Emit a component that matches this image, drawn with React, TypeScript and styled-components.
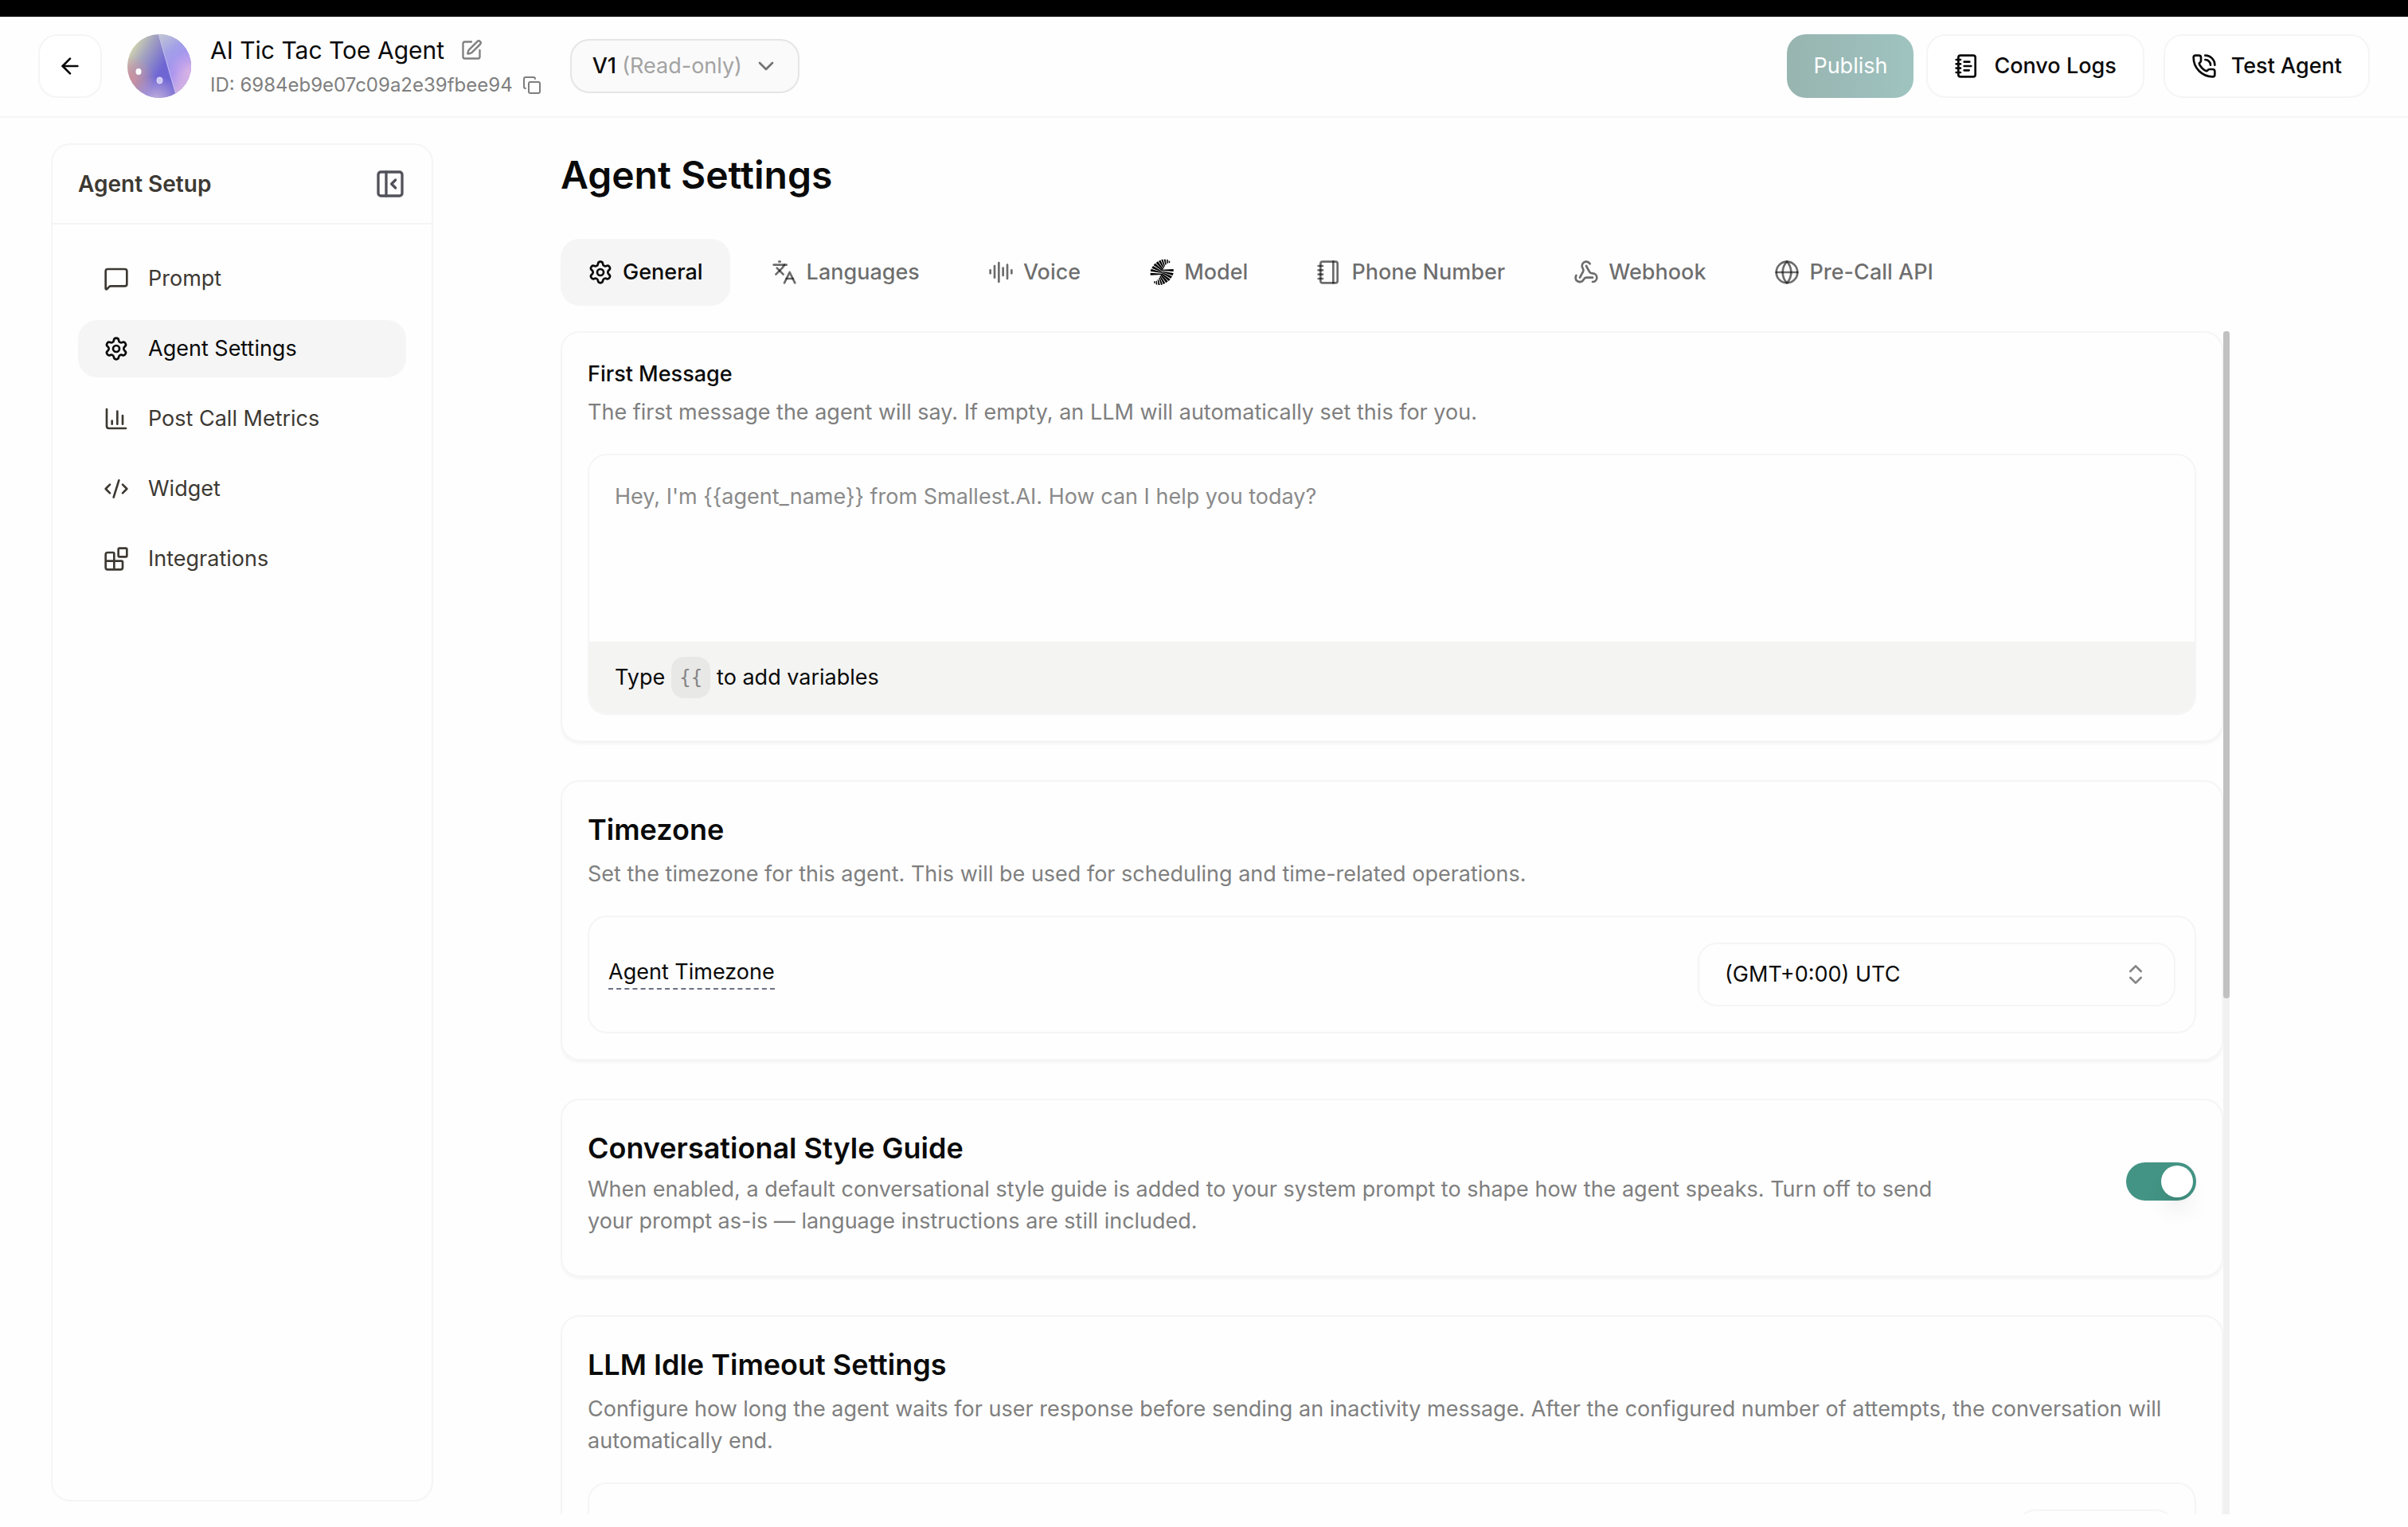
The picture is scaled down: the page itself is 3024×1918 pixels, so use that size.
import React, { useState } from "react";
import styled, { createGlobalStyle, css } from "styled-components";
import {
  ArrowLeft,
  AudioLines,
  Blocks,
  ChartColumn,
  ChevronDown,
  ChevronsUpDown,
  CodeXml,
  Copy,
  Globe,
  Languages,
  MessageSquare,
  Notebook,
  NotebookText,
  PanelLeftClose,
  PhoneCall,
  Settings,
  SquarePen,
  Webhook,
} from "lucide-react";

const color = {
  ink: "#0a0a0a",
  muted: "#7f7f7f",
  nav: "#3d3933",
  line: "#f5f5f5",
  fill: "#f5f5f5",
  surface: "#fefefe",
  green: "#439484",
};

const GlobalStyle = createGlobalStyle`
  *, *::before, *::after { box-sizing: border-box; }
  body {
    margin: 0;
    background: ${color.surface};
    color: ${color.ink};
    font-family: Inter, "Liberation Sans", sans-serif;
    font-size: 27px;
    line-height: 40px;
  }
  button, input, select, textarea {
    font: inherit;
    color: inherit;
  }
  button { cursor: pointer; }
  h1, h2, p { margin: 0; }
  svg { flex: none; display: block; }
`;

const Page = styled.div`
  display: flex;
  flex-direction: column;
  height: 100vh;
  overflow: hidden;
`;

const TopStrip = styled.div`
  flex: none;
  height: 21px;
  background: #000;
`;

/* ---------- header ---------- */

const Header = styled.header`
  flex: none;
  display: flex;
  align-items: flex-start;
  justify-content: space-between;
  padding: 22px 48px;
  height: 127px;
  border-bottom: 2px solid ${color.line};
`;

const HeaderGroup = styled.div`
  display: flex;
  align-items: center;
  height: 80px;
`;

const BackButton = styled.button`
  display: grid;
  place-items: center;
  width: 80px;
  height: 80px;
  padding: 0;
  border: 2px solid ${color.line};
  border-radius: 24px;
  background: #fff;
  margin-right: 32px;
`;

const AgentInfo = styled.div`
  display: flex;
  flex-direction: column;
  padding-top: 4px;
  margin: 0 36px 0 24px;
`;

const InfoLine = styled.div<{ $small?: boolean }>`
  display: flex;
  align-items: center;
  gap: ${(p) => (p.$small ? 12 : 20)}px;
  font-size: ${(p) => (p.$small ? 24 : 30)}px;
  line-height: 44px;
  color: ${(p) => (p.$small ? color.muted : color.ink)};
`;

const IconButton = styled.button`
  display: grid;
  place-items: center;
  padding: 0;
  border: 0;
  background: none;
  color: ${color.muted};
`;

const VersionButton = styled.button`
  display: flex;
  align-items: center;
  justify-content: space-between;
  min-width: 288px;
  height: 68px;
  padding: 0 24px 0 26px;
  border: 2px solid #e5e5e5;
  border-radius: 24px;
  background: #fafafa;
  font-weight: 500;
  svg { color: #737373; }
`;

const ReadOnly = styled.span`
  font-weight: 400;
  color: #a3a3a3;
`;

const ActionButton = styled.button<{ $primary?: boolean }>`
  display: flex;
  align-items: center;
  gap: 18px;
  height: 80px;
  padding: 0 33px;
  border: 2px solid ${color.line};
  border-radius: 24px;
  background: #fff;
  font-weight: 500;
  white-space: nowrap;
  margin-left: 24px;
  ${(p) =>
    p.$primary &&
    css`
      border: 0;
      background: linear-gradient(90deg, #98b5b0, #9bbbb8 50%, #9fc4bf);
      color: #fff;
      font-weight: 400;
      margin-right: -8px;
    `}
`;

/* ---------- sidebar ---------- */

const Body = styled.div`
  flex: 1;
  min-height: 0;
  display: flex;
  padding: 32px 0 16px 64px;
`;

const Sidebar = styled.aside`
  flex: none;
  width: 480px;
  margin-bottom: 16px;
  border: 2px solid ${color.line};
  border-radius: 24px;
`;

const SidebarHead = styled.div`
  display: flex;
  align-items: center;
  justify-content: space-between;
  height: 100px;
  padding: 0 32px;
  border-bottom: 2px solid ${color.line};
  color: ${color.nav};
  font-size: 28px;
  font-weight: 600;
`;

const CollapseButton = styled(IconButton)`
  color: #52525b;
`;

const Nav = styled.nav`
  display: flex;
  flex-direction: column;
  gap: 16px;
  padding: 32px;
`;

const NavLink = styled.a<{ $active?: boolean }>`
  display: flex;
  align-items: center;
  gap: 24px;
  height: 72px;
  padding: 0 32px;
  border-radius: 24px;
  text-decoration: none;
  color: ${(p) => (p.$active ? color.ink : color.nav)};
  background: ${(p) => (p.$active ? color.fill : "transparent")};
`;

/* ---------- main ---------- */

const Main = styled.main`
  flex: 1;
  min-width: 0;
  display: flex;
  flex-direction: column;
  padding: 0 224px 0 160px;
`;

const PageTitle = styled.h1`
  font-size: 48px;
  line-height: 80px;
  font-weight: 600;
  margin-bottom: 40px;
`;

const Tabs = styled.div`
  display: flex;
  gap: 18px;
  margin-bottom: 32px;
`;

const Tab = styled.button<{ $active?: boolean }>`
  display: flex;
  align-items: center;
  gap: 12px;
  height: 84px;
  padding: 0 34px;
  border: 0;
  border-radius: 24px;
  font-weight: 500;
  white-space: nowrap;
  color: ${(p) => (p.$active ? color.ink : "rgba(10, 10, 10, 0.6)")};
  background: ${(p) => (p.$active ? color.fill : "transparent")};
`;

const Scroller = styled.div`
  flex: 1;
  min-height: 0;
  display: flex;
`;

const Cards = styled.div`
  flex: 1;
  min-width: 0;
  display: flex;
  flex-direction: column;
  gap: 48px;
  overflow: hidden;
`;

const ScrollTrack = styled.div`
  flex: none;
  width: 8px;
  background: #f1f1f1;
`;

const ScrollThumb = styled.div`
  height: 56.4%;
  border-radius: 4px;
  background: #c1c1c1;
`;

const Card = styled.section`
  flex: none;
  padding: 32px;
  border: 2px solid ${color.line};
  border-radius: 24px;
  box-shadow: 0 2px 4px rgba(0, 0, 0, 0.05);
`;

const FieldLabel = styled.label`
  display: block;
  font-weight: 500;
  margin-bottom: 8px;
`;

const CardTitle = styled.h2<{ $tight?: boolean }>`
  font-size: 36px;
  line-height: 56px;
  font-weight: 600;
  margin-bottom: ${(p) => (p.$tight ? 4 : 8)}px;
`;

const Description = styled.p`
  color: ${color.muted};
`;

const Editor = styled.div`
  margin-top: 32px;
  border: 2px solid ${color.line};
  border-radius: 24px;
  overflow: hidden;
`;

const MessageBox = styled.textarea`
  display: block;
  width: 100%;
  height: 234px;
  padding: 32px;
  border: 0;
  outline: 0;
  resize: none;
  background: transparent;
  &::placeholder { color: #8a8a8a; opacity: 1; }
`;

const EditorHint = styled.div`
  display: flex;
  align-items: center;
  gap: 8px;
  height: 90px;
  padding: 0 32px;
  background: #f4f4f3;
`;

const Key = styled.kbd`
  padding: 6px 10px;
  border-radius: 16px;
  background: #e8e8e7;
  color: #858585;
  font-family: "DejaVu Sans Mono", "Liberation Mono", monospace;
  font-size: 24px;
`;

const SettingRow = styled.div`
  display: flex;
  align-items: center;
  justify-content: space-between;
  margin-top: 32px;
  padding: 32px 24px;
  border: 2px solid ${color.line};
  border-radius: 24px;
`;

const HintLabel = styled.label`
  line-height: 32px;
  padding-bottom: 4px;
  border-bottom: 2px dashed #6b7280;
`;

const SelectBox = styled.div`
  display: grid;
  align-items: center;
  width: 600px;
  svg {
    grid-area: 1 / 1;
    justify-self: end;
    margin-right: 34px;
    color: #858585;
    pointer-events: none;
  }
`;

const Select = styled.select`
  grid-area: 1 / 1;
  appearance: none;
  width: 100%;
  height: 80px;
  padding: 0 32px;
  border: 2px solid ${color.line};
  border-radius: 24px;
  background: transparent;
`;

const NumberInput = styled.input`
  width: 200px;
  height: 80px;
  padding: 0 32px;
  border: 2px solid ${color.line};
  border-radius: 24px;
  background: transparent;
`;

const ToggleRow = styled.div`
  display: flex;
  align-items: center;
  justify-content: space-between;
  padding-bottom: 16px;
`;

const ToggleText = styled.div`
  max-width: 1720px;
`;

const Toggle = styled.input`
  appearance: none;
  flex: none;
  display: flex;
  justify-content: flex-start;
  width: 88px;
  height: 48px;
  margin: 0;
  padding: 4px;
  border-radius: 24px;
  background: #d4d4d4;
  cursor: pointer;
  &::before {
    content: "";
    width: 40px;
    height: 40px;
    border-radius: 50%;
    background: #fff;
    box-shadow: 0 20px 30px -6px rgba(0, 0, 0, 0.1), 0 8px 12px -8px rgba(0, 0, 0, 0.1);
  }
  &:checked {
    justify-content: flex-end;
    background: ${color.green};
  }
`;

/* ---------- drawings ---------- */

const blades = [
  "19,74 19,83 62,81 62,77",
  "22,59 19,68 62,75 62,72",
  "29,48 24,56 62,71 63,68",
  "37,38 31,45 63,67 65,63",
  "47,31 40,37 65,63 68,60",
  "57,26 50,30 68,58 71,55",
  "66,23 60,25 71,52 74,49",
  "76,23 70,23 75,44 79,43",
  "85,25 80,24 81,39 85,38",
  "93,31 88,28 88,37 92,37",
];

const ModelLogo = () => (
  <svg width="32" height="36" viewBox="14 18 96 108" fill="#000" aria-hidden="true">
    {blades.map((points) => (
      <g key={points}>
        <polygon points={points} />
        <polygon points={points} transform="rotate(180 62.5 71.5)" />
      </g>
    ))}
  </svg>
);

const Avatar = () => (
  <svg width="80" height="80" viewBox="0 0 80 80" role="img" aria-label="Agent avatar">
    <defs>
      <clipPath id="disc">
        <circle cx="40" cy="40" r="40" />
      </clipPath>
      <linearGradient id="sweep" x1="0" y1="0.1" x2="0.7" y2="0.5">
        <stop offset="0.1" stopColor="#d9dcae" />
        <stop offset="0.42" stopColor="#a3a3bf" />
        <stop offset="0.85" stopColor="#6f66d4" />
      </linearGradient>
      <linearGradient id="facet" x1="0" y1="0" x2="0.4" y2="1">
        <stop offset="0" stopColor="#c3cad0" />
        <stop offset="0.35" stopColor="#a3a0e8" />
        <stop offset="0.7" stopColor="#a48ff2" />
        <stop offset="1" stopColor="#d3b3e2" />
      </linearGradient>
      <radialGradient id="rose" cx="0.02" cy="0.72" r="0.4">
        <stop offset="0" stopColor="#d08f9a" />
        <stop offset="1" stopColor="#d08f9a" stopOpacity="0" />
      </radialGradient>
      <radialGradient id="base" cx="0.45" cy="1.05" r="0.4">
        <stop offset="0" stopColor="#c6b2dc" />
        <stop offset="1" stopColor="#c6b2dc" stopOpacity="0" />
      </radialGradient>
      <radialGradient id="rim" cx="1" cy="0.6" r="0.35">
        <stop offset="0" stopColor="#dab4e4" />
        <stop offset="1" stopColor="#dab4e4" stopOpacity="0" />
      </radialGradient>
    </defs>
    <g clipPath="url(#disc)">
      <rect width="80" height="80" fill="url(#sweep)" />
      <rect width="80" height="80" fill="url(#rose)" />
      <path d="M39 0H80V80H62Z" fill="url(#facet)" />
      <rect width="80" height="80" fill="url(#base)" />
      <rect width="80" height="80" fill="url(#rim)" />
      <path d="M39 0L61 76" stroke="#c3bfee" strokeWidth="1" />
      <ellipse cx="14" cy="47" rx="3.5" ry="4" fill="#fff" />
      <ellipse cx="40.5" cy="58" rx="3.5" ry="4" fill="#ccc6f4" stroke="#e6e2fb" />
    </g>
  </svg>
);

/* ---------- content ---------- */

const navItems = [
  { label: "Prompt", icon: MessageSquare },
  { label: "Agent Settings", icon: Settings },
  { label: "Post Call Metrics", icon: ChartColumn },
  { label: "Widget", icon: CodeXml },
  { label: "Integrations", icon: Blocks },
];

const tabs = [
  { label: "General", icon: Settings },
  { label: "Languages", icon: Languages },
  { label: "Voice", icon: AudioLines },
  { label: "Model", icon: ModelLogo },
  { label: "Phone Number", icon: Notebook },
  { label: "Webhook", icon: Webhook },
  { label: "Pre-Call API", icon: Globe },
];

export default function App() {
  const [tab, setTab] = useState("General");
  const [styleGuide, setStyleGuide] = useState(true);

  return (
    <Page>
      <GlobalStyle />
      <TopStrip />
      <Header>
        <HeaderGroup>
          <BackButton aria-label="Back">
            <ArrowLeft size={32} />
          </BackButton>
          <Avatar />
          <AgentInfo>
            <InfoLine>
              <span>AI Tic Tac Toe Agent</span>
              <IconButton aria-label="Rename agent">
                <SquarePen size={28} />
              </IconButton>
            </InfoLine>
            <InfoLine $small>
              <span>ID: 6984eb9e07c09a2e39fbee94</span>
              <IconButton aria-label="Copy ID">
                <Copy size={24} />
              </IconButton>
            </InfoLine>
          </AgentInfo>
          <VersionButton aria-haspopup="listbox">
            <span>
              V1 <ReadOnly>(Read-only)</ReadOnly>
            </span>
            <ChevronDown size={32} />
          </VersionButton>
        </HeaderGroup>
        <HeaderGroup>
          <ActionButton $primary>Publish</ActionButton>
          <ActionButton>
            <NotebookText size={32} />
            Convo Logs
          </ActionButton>
          <ActionButton>
            <PhoneCall size={32} />
            Test Agent
          </ActionButton>
        </HeaderGroup>
      </Header>

      <Body>
        <Sidebar>
          <SidebarHead>
            Agent Setup
            <CollapseButton aria-label="Collapse sidebar">
              <PanelLeftClose size={40} />
            </CollapseButton>
          </SidebarHead>
          <Nav>
            {navItems.map(({ label, icon: Icon }) => (
              <NavLink key={label} href="#" $active={label === "Agent Settings"}>
                <Icon size={32} />
                {label}
              </NavLink>
            ))}
          </Nav>
        </Sidebar>

        <Main>
          <PageTitle>Agent Settings</PageTitle>
          <Tabs role="tablist">
            {tabs.map(({ label, icon: Icon }) => (
              <Tab
                key={label}
                role="tab"
                aria-selected={tab === label}
                $active={tab === label}
                onClick={() => setTab(label)}
              >
                <Icon size={32} />
                {label}
              </Tab>
            ))}
          </Tabs>

          <Scroller>
            <Cards>
              <Card>
                <FieldLabel htmlFor="first-message">First Message</FieldLabel>
                <Description>
                  The first message the agent will say. If empty, an LLM will automatically set this for you.
                </Description>
                <Editor>
                  <MessageBox
                    id="first-message"
                    placeholder="Hey, I'm {{agent_name}} from Smallest.AI. How can I help you today?"
                  />
                  <EditorHint>
                    <span>Type</span>
                    <Key>{"{{"}</Key>
                    <span>to add variables</span>
                  </EditorHint>
                </Editor>
              </Card>

              <Card>
                <CardTitle>Timezone</CardTitle>
                <Description>
                  Set the timezone for this agent. This will be used for scheduling and time-related operations.
                </Description>
                <SettingRow>
                  <HintLabel htmlFor="timezone">Agent Timezone</HintLabel>
                  <SelectBox>
                    <Select id="timezone" defaultValue="utc">
                      <option value="utc">(GMT+0:00) UTC</option>
                    </Select>
                    <ChevronsUpDown size={32} />
                  </SelectBox>
                </SettingRow>
              </Card>

              <Card>
                <ToggleRow>
                  <ToggleText>
                    <CardTitle $tight>
                      <label htmlFor="style-guide">Conversational Style Guide</label>
                    </CardTitle>
                    <Description>
                      When enabled, a default conversational style guide is added to your system prompt to shape how
                      the agent speaks. Turn off to send your prompt as-is — language instructions are still included.
                    </Description>
                  </ToggleText>
                  <Toggle
                    id="style-guide"
                    type="checkbox"
                    role="switch"
                    checked={styleGuide}
                    onChange={(e) => setStyleGuide(e.target.checked)}
                  />
                </ToggleRow>
              </Card>

              <Card>
                <CardTitle>LLM Idle Timeout Settings</CardTitle>
                <Description>
                  Configure how long the agent waits for user response before sending an inactivity message. After the
                  configured number of attempts, the conversation will automatically end.
                </Description>
                <SettingRow>
                  <span />
                  <NumberInput type="number" aria-label="Idle timeout" />
                </SettingRow>
              </Card>
            </Cards>
            <ScrollTrack>
              <ScrollThumb />
            </ScrollTrack>
          </Scroller>
        </Main>
      </Body>
    </Page>
  );
}
